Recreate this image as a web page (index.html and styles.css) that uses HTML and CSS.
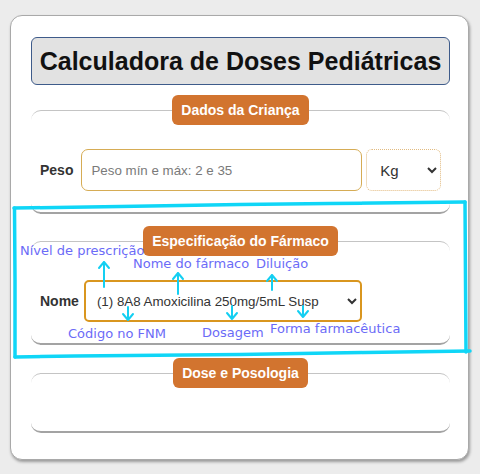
FILE: index.html
```html
<!DOCTYPE html>
<html lang="pt">
<head>
<meta charset="utf-8">
<title>Calculadora de Doses Pediátricas</title>
<link rel="stylesheet" href="styles.css">
</head>
<body>
<div class="card">
  <h1 class="title">Calculadora de Doses Pediátricas</h1>

  <fieldset class="group">
    <legend>Dados da Criança</legend>
    <div class="row row-peso">
      <label class="lbl">Peso</label>
      <input class="peso" type="text" placeholder="Peso mín e máx: 2 e 35">
      <select class="unit"><option>Kg</option></select>
    </div>
  </fieldset>

  <fieldset class="group group-farmaco">
    <legend>Especificação do Fármaco</legend>
    <div class="row row-nome">
      <label class="lbl">Nome</label>
      <select class="nome"><option>(1) 8A8 Amoxicilina 250mg/5mL Susp</option></select>
    </div>
  </fieldset>

  <fieldset class="group group-dose">
    <legend>Dose e Posologia</legend>
  </fieldset>
</div>

<svg class="annot" width="480" height="474" viewBox="0 0 480 474" xmlns="http://www.w3.org/2000/svg">
  <g class="rect">
    <path d="M14 208 L120 206.5 L240 204.5 L330 203.5 L465 202"/>
    <path d="M465 202 L465.5 280 L466 352"/>
    <path d="M470 351 L330 353 L240 354.5 L75 356 L15 357"/>
    <path d="M15 357 L15 280 L14.5 208"/>
  </g>
  <g class="arrow">
    <path d="M104 287 L104 262 M99 268 L104 262 L109 268"/>
    <path d="M178 294 L178 273 M173 279 L178 273 L183 279"/>
    <path d="M272 290 L272 275 M267 281 L272 275 L277 281"/>
    <path d="M128 307 L128 320 M123 314 L128 320 L133 314"/>
    <path d="M232 306 L232 319 M227 313 L232 319 L237 313"/>
    <path d="M303 306 L303 317 M298 311 L303 317 L308 311"/>
  </g>
  <g class="note">
    <text x="20" y="255">Nível de prescrição</text>
    <text x="133" y="268">Nome do fármaco</text>
    <text x="256" y="268">Diluição</text>
    <text x="68" y="338">Código no FNM</text>
    <text x="202" y="337">Dosagem</text>
    <text x="270" y="333">Forma farmacêutica</text>
  </g>
</svg>
</body>
</html>
```

FILE: styles.css
```css
html, body {
  margin: 0;
  background: #ececec;
}

body {
  padding: 15px 11px 0 10px;
  font-family: "Liberation Sans", Arial, sans-serif;
  color: #222;
  position: relative;
  height: 474px;
  box-sizing: border-box;
  overflow: hidden;
}

.card {
  background: #ffffff;
  border: 1px solid #a9a9a9;
  border-radius: 12px;
  box-shadow: 1px 2px 3px rgba(0, 0, 0, 0.35);
  padding: 21px 18px 26px 20px;
}

.title {
  margin: 0 0 10px 0;
  height: 48px;
  box-sizing: border-box;
  background: #e2e2e2;
  border: 1px solid #3e5b8a;
  border-radius: 6px;
  font-size: 25px;
  font-weight: bold;
  line-height: 46px;
  text-align: center;
  color: #111;
}

.group {
  margin: 0;
  border: 0;
  border-top: 1px solid #c4c4c4;
  border-bottom: 2px solid #a3a3a3;
  border-radius: 10px;
  padding: 24px 9px 21px 9px;
  min-width: 0;
}

.group legend {
  margin: 0 auto;
  padding: 6px 9px;
  background: #d2742f;
  color: #ffffff;
  border-radius: 6px;
  font-size: 14px;
  font-weight: bold;
  line-height: 18px;
}

.group-farmaco {
  margin-top: 12px;
}

.group-dose {
  margin-top: 13px;
  padding: 24px 9px 19px 9px;
}

.row {
  display: flex;
  align-items: center;
}

.row-peso .lbl {
  margin-right: 8px;
}

.row-nome .lbl {
  margin-right: 5px;
}

.lbl {
  font-size: 14px;
  font-weight: bold;
  color: #333;
}

.peso {
  width: 282px;
  height: 42px;
  box-sizing: border-box;
  border: 1px solid #d6ac55;
  border-radius: 7px;
  padding: 0 9px;
  font-family: "Liberation Sans", Arial, sans-serif;
  font-size: 13.333px;
  color: #333;
  background: #fff;
  outline: none;
}

.peso::placeholder {
  color: #7a7a7a;
}

.unit {
  margin-left: 4px;
  width: 75px;
  height: 42px;
  box-sizing: border-box;
  border: 1px dotted #e2bb80;
  border-radius: 6px;
  padding: 0 0 0 9px;
  font-family: "Liberation Sans", Arial, sans-serif;
  font-size: 15px;
  color: #333;
  background: #fff;
}

.nome {
  width: 278px;
  height: 42px;
  box-sizing: border-box;
  border: 2px solid #d9961f;
  border-radius: 5px;
  padding: 0 0 0 7px;
  font-family: "Liberation Sans", Arial, sans-serif;
  font-size: 13.333px;
  color: #333;
  background: #fff;
}

.annot {
  position: absolute;
  left: 0;
  top: 0;
  pointer-events: none;
}

.annot .rect path {
  fill: none;
  stroke: #10d6f7;
  stroke-width: 3.5;
  stroke-linecap: round;
}

.annot .arrow path {
  fill: none;
  stroke: #14cff2;
  stroke-width: 2;
  stroke-linecap: round;
  stroke-linejoin: round;
}

.annot .note text {
  font-family: "DejaVu Sans", sans-serif;
  font-size: 13px;
  fill: #6b6bf7;
}
```
